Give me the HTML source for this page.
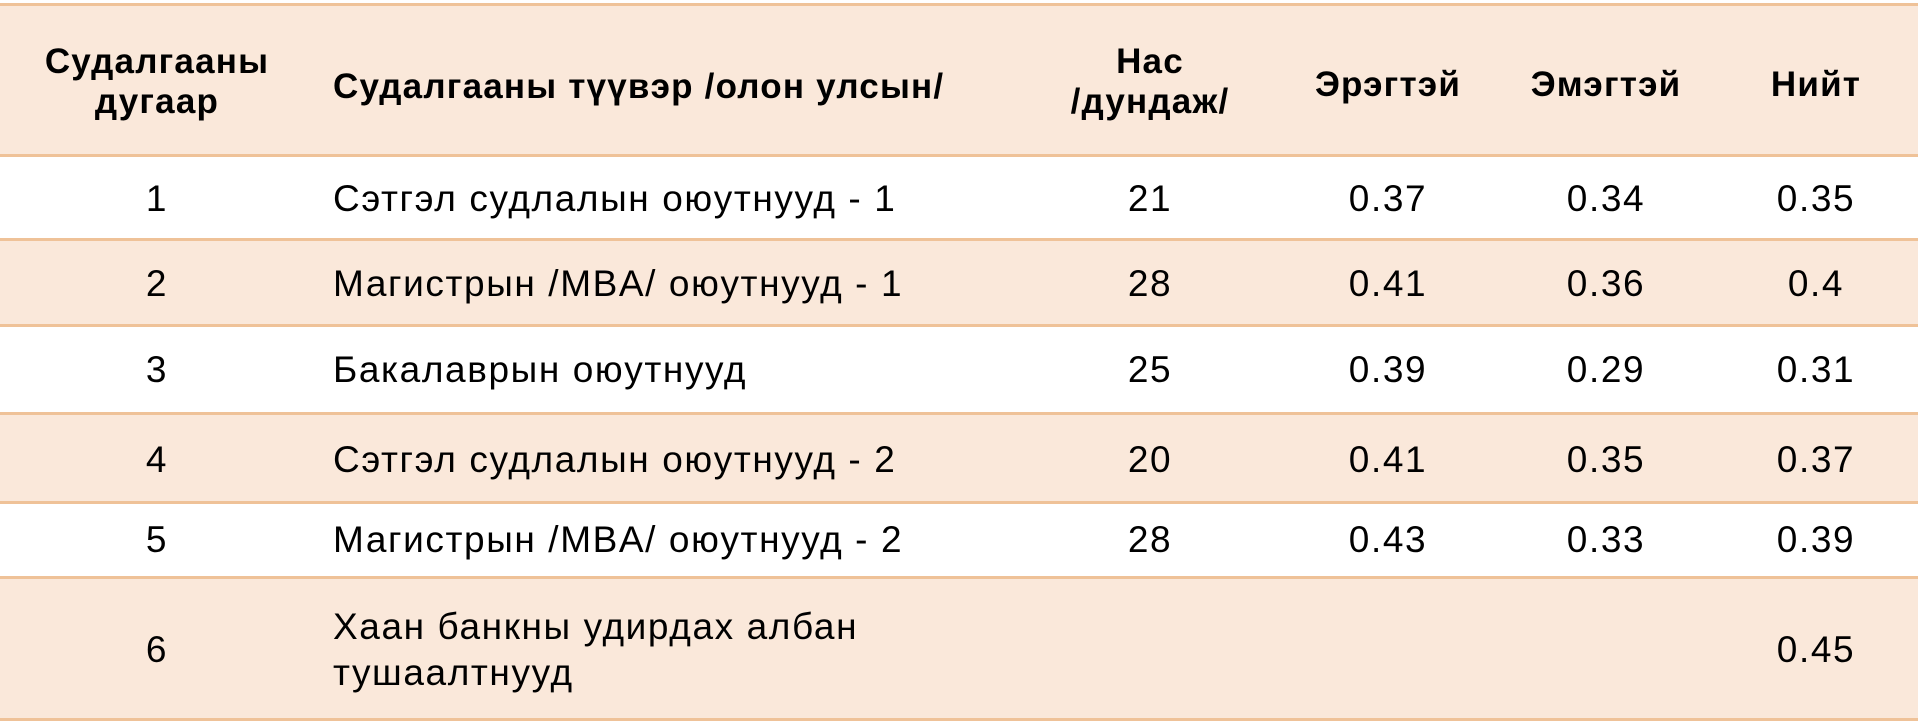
<!DOCTYPE html>
<html><head><meta charset="utf-8"><style>
body{margin:0;width:1918px;height:724px;background:#fff;position:relative;overflow:hidden;font-family:"Liberation Sans","DejaVu Sans",sans-serif;color:#000}
.r{position:absolute;left:0;width:1918px}
.bg{background:#fae8da}
.l{position:absolute;left:0;width:1918px;height:3px;background:#efc298}
.t{position:absolute;font-size:37px;line-height:42px;letter-spacing:1.6px;transform:translateY(-50%);white-space:nowrap}
.c{transform:translate(-50%,-50%);text-align:center}
.b{font-weight:bold;font-size:35px;letter-spacing:1.2px;line-height:40px}
</style></head><body>
<div class="r bg" style="top:4px;height:151px"></div>
<div class="r bg" style="top:239px;height:86px"></div>
<div class="r bg" style="top:413px;height:89px"></div>
<div class="r bg" style="top:577px;height:142px"></div>
<div class="l" style="top:3px"></div>
<div class="l" style="top:154px"></div>
<div class="l" style="top:238px"></div>
<div class="l" style="top:324px"></div>
<div class="l" style="top:412px"></div>
<div class="l" style="top:501px"></div>
<div class="l" style="top:576px"></div>
<div class="l" style="top:718px"></div>

<div class="t c b" style="left:157px;top:82px">Судалгааны<br>дугаар</div>
<div class="t b" style="left:333px;top:87px">Судалгааны түүвэр /олон улсын/</div>
<div class="t c b" style="left:1150px;top:82px">Нас<br>/дундаж/</div>
<div class="t c b" style="left:1388px;top:85px">Эрэгтэй</div>
<div class="t c b" style="left:1606px;top:85px">Эмэгтэй</div>
<div class="t c b" style="left:1816px;top:85px">Нийт</div>

<div class="t c" style="left:157px;top:199px">1</div>
<div class="t" style="left:333px;top:199px">Сэтгэл судлалын оюутнууд - 1</div>
<div class="t c" style="left:1150px;top:199px">21</div>
<div class="t c" style="left:1388px;top:199px">0.37</div>
<div class="t c" style="left:1606px;top:199px">0.34</div>
<div class="t c" style="left:1816px;top:199px">0.35</div>

<div class="t c" style="left:157px;top:284px">2</div>
<div class="t" style="left:333px;top:284px">Магистрын /MBA/ оюутнууд - 1</div>
<div class="t c" style="left:1150px;top:284px">28</div>
<div class="t c" style="left:1388px;top:284px">0.41</div>
<div class="t c" style="left:1606px;top:284px">0.36</div>
<div class="t c" style="left:1816px;top:284px">0.4</div>

<div class="t c" style="left:157px;top:370px">3</div>
<div class="t" style="left:333px;top:370px">Бакалаврын оюутнууд</div>
<div class="t c" style="left:1150px;top:370px">25</div>
<div class="t c" style="left:1388px;top:370px">0.39</div>
<div class="t c" style="left:1606px;top:370px">0.29</div>
<div class="t c" style="left:1816px;top:370px">0.31</div>

<div class="t c" style="left:157px;top:460px">4</div>
<div class="t" style="left:333px;top:460px">Сэтгэл судлалын оюутнууд - 2</div>
<div class="t c" style="left:1150px;top:460px">20</div>
<div class="t c" style="left:1388px;top:460px">0.41</div>
<div class="t c" style="left:1606px;top:460px">0.35</div>
<div class="t c" style="left:1816px;top:460px">0.37</div>

<div class="t c" style="left:157px;top:540px">5</div>
<div class="t" style="left:333px;top:540px">Магистрын /MBA/ оюутнууд - 2</div>
<div class="t c" style="left:1150px;top:540px">28</div>
<div class="t c" style="left:1388px;top:540px">0.43</div>
<div class="t c" style="left:1606px;top:540px">0.33</div>
<div class="t c" style="left:1816px;top:540px">0.39</div>

<div class="t c" style="left:157px;top:650px">6</div>
<div class="t" style="left:333px;top:650px;line-height:46px">Хаан банкны удирдах албан<br>тушаалтнууд</div>
<div class="t c" style="left:1816px;top:650px">0.45</div>
</body></html>
